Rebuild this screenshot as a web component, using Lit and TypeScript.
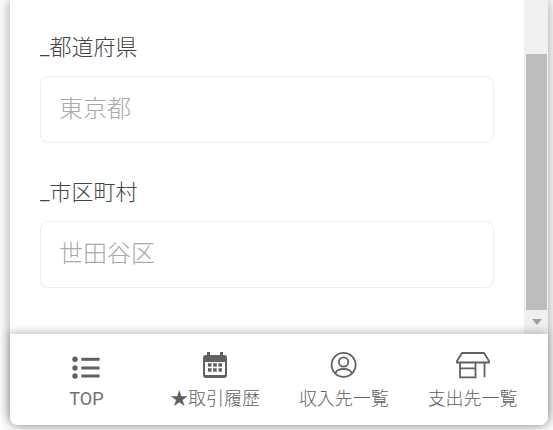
import { LitElement, html, css } from "lit";
import { customElement } from "lit/decorators.js";

@customElement("app-root")
export class AppRoot extends LitElement {
  static styles = css`
    :host {
      display: block;
      width: 553px;
      height: 430px;
      overflow: hidden;
      background: #fff;
      font-family: Roboto, "Noto Sans CJK JP", sans-serif;
      font-weight: 300;
    }
    .card {
      width: 538px;
      height: 425px;
      margin-left: 10px;
      display: flex;
      flex-direction: column;
      background: #fff;
      border-radius: 0 0 8px 8px;
      box-shadow: 0 0 14px rgba(0, 0, 0, 0.4);
    }
    .body {
      height: 334px;
      display: flex;
    }
    .form {
      flex: 1;
      padding: 32px 30px 0;
    }
    .field {
      margin-bottom: 34px;
    }
    .label {
      height: 32px;
      line-height: 32px;
      font-size: 22px;
      color: #444;
      margin-bottom: 12px;
    }
    .input {
      height: 65px;
      border: 1px solid #eee;
      border-radius: 8px;
      padding: 0 18px;
      line-height: 65px;
      font-size: 24px;
      color: #aaa;
    }
    .scrollbar {
      width: 24px;
      display: flex;
      flex-direction: column;
      background: #f0f0f0;
      padding: 54px 1px 0 2px;
      box-sizing: border-box;
    }
    .thumb {
      flex: 1;
      background: #bdbdbd;
    }
    .arrow {
      height: 24px;
      display: flex;
      align-items: center;
      justify-content: center;
    }
    .footer {
      flex: 1;
      position: relative;
      display: grid;
      grid-template-columns: repeat(4, 1fr);
      padding: 0 11px 0 12px;
      background: #fff;
      border-radius: 0 0 8px 8px;
      box-shadow: 0 -2px 10px rgba(0, 0, 0, 0.25);
    }
    .item {
      display: flex;
      flex-direction: column;
      align-items: center;
      color: #616161;
      font-size: 18px;
      padding-top: 15px;
    }
    .icon {
      width: 36px;
      height: 36px;
      display: block;
    }
    .text {
      line-height: 26px;
      margin-top: 1px;
      white-space: nowrap;
    }
    .latin {
      font-weight: 400;
      color: #707070;
    }
  `;

  render() {
    return html`
      <div class="card">
        <div class="body">
          <div class="form">
            <div class="field">
              <div class="label">_都道府県</div>
              <div class="input">東京都</div>
            </div>
            <div class="field">
              <div class="label">_市区町村</div>
              <div class="input">世田谷区</div>
            </div>
          </div>
          <div class="scrollbar">
            <div class="thumb"></div>
            <div class="arrow">
              <svg width="10" height="6" viewBox="0 0 10 6"><path d="M0 0h10L5 6z" fill="#a0a0a0" /></svg>
            </div>
          </div>
        </div>
        <div class="footer">
          <div class="item">
            <svg class="icon" viewBox="0 0 36 36" fill="#616161">
              <circle cx="7" cy="10.300" r="2.700" /><circle cx="7" cy="19" r="2.700" /><circle cx="7" cy="27" r="2.700" />
              <rect x="13.300" y="8.800" width="18.300" height="3" /><rect x="13.300" y="17.500" width="18.300" height="3" /><rect x="13.300" y="25.500" width="18.300" height="3" />
            </svg>
            <span class="text latin">TOP</span>
          </div>
          <div class="item">
            <svg class="icon" viewBox="0 0 36 36" fill="#616161">
              <path fill-rule="evenodd" d="M9 6h1V3h3v3h10V3h3v3h1a3 3 0 0 1 3 3v17a3 3 0 0 1-3 3H9a3 3 0 0 1-3-3V9a3 3 0 0 1 3-3zm-1 7v13h20V13z" />
              <rect x="11" y="14.200" width="3.500" height="3.500" /><rect x="16.200" y="14.200" width="3.500" height="3.500" /><rect x="21.500" y="14.200" width="3.500" height="3.500" />
              <rect x="11" y="19.200" width="3.500" height="3.500" /><rect x="16.200" y="19.200" width="3.500" height="3.500" /><rect x="21.500" y="19.200" width="3.500" height="3.500" />
            </svg>
            <span class="text">★取引履歴</span>
          </div>
          <div class="item">
            <svg class="icon" viewBox="0 0 36 36" fill="none" stroke="#616161" stroke-width="1.800">
              <circle cx="17.600" cy="15.800" r="12" />
              <circle cx="17.600" cy="13" r="4.700" />
              <path d="M9.600 24.500c0-2.800 3.500-4.500 8-4.500s8 1.700 8 4.500" />
            </svg>
            <span class="text">収入先一覧</span>
          </div>
          <div class="item">
            <svg class="icon" viewBox="0 0 36 36" fill="none" stroke="#616161" stroke-width="1.800">
              <path d="M7 4h22l5 8v1.500H2V12z" />
              <path d="M5 13.500V28.300h15.500V13.500M29.500 13.500V28.300M5 19.300h15.500" />
            </svg>
            <span class="text">支出先一覧</span>
          </div>
        </div>
      </div>
    `;
  }
}
